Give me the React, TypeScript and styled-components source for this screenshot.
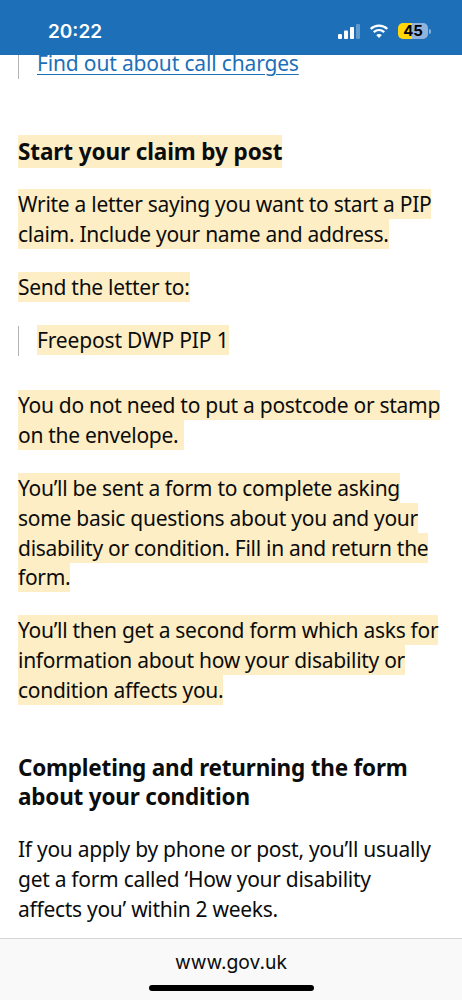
import styled, { createGlobalStyle } from "styled-components";

const colors = {
  blue: "#1d70b8",
  link: "#1d70b8",
  text: "#0b0c0c",
  highlight: "#fdeec5",
  rule: "#b1b4b6",
  bar: "#f9f9f9",
};

const GlobalStyle = createGlobalStyle`
  html, body {
    margin: 0;
    padding: 0;
    background: #fff;
  }
  body {
    font-family: "Noto Sans", "Open Sans", sans-serif;
    color: ${colors.text};
  }
`;

const Page = styled.div`
  width: 462px;
  height: 1000px;
  display: flex;
  flex-direction: column;
  overflow: hidden;
`;

const StatusBar = styled.header`
  position: relative;
  z-index: 2;
  flex: 0 0 55px;
  background: ${colors.blue};
  color: #fff;
  display: flex;
  align-items: center;
  justify-content: space-between;
  padding: 7px 31px 0 48px;
  box-sizing: border-box;
`;

const Clock = styled.span`
  font-family: "Inter", sans-serif;
  font-size: 19px;
  font-weight: 600;
`;

const StatusIcons = styled.div`
  display: flex;
  align-items: center;
  gap: 9px;
`;

const Battery = styled.div`
  width: 30px;
  height: 16px;
  border-radius: 5px;
  background: linear-gradient(90deg, #ffd60a 47%, #8fb3dc 47%);
  color: #000;
  font-family: "Inter", sans-serif;
  font-size: 15px;
  font-weight: 700;
  line-height: 16px;
  text-align: center;
`;

const BatteryWrap = styled.div`
  display: flex;
  align-items: center;
  gap: 1px;
`;

const BatteryCap = styled.span`
  width: 2px;
  height: 5px;
  border-radius: 0 2px 2px 0;
  background: #8fb3dc;
`;

const Content = styled.main`
  flex: 1;
  margin-top: -6px;
  padding: 0 18px;
  overflow: hidden;
`;

const Inset = styled.div<{ $gap: number }>`
  border-left: 1px solid ${colors.rule};
  padding-left: 18px;
  margin-bottom: ${(p) => p.$gap}px;
  font-size: 21px;
  letter-spacing: -0.16px;
  line-height: 29.7px;
`;

const CallLink = styled.a`
  color: ${colors.link};
  text-decoration: underline;
  text-decoration-thickness: 1px;
  text-underline-offset: 3px;
`;

const Heading = styled.h2<{ $gap: number; $spacing?: number }>`
  margin: 0 0 ${(p) => p.$gap}px;
  font-size: 22.5px;
  letter-spacing: ${(p) => p.$spacing ?? -0.1}px;
  line-height: 29.7px;
  font-weight: 700;
`;

const Para = styled.p<{ $gap?: number; $maxWidth?: number }>`
  margin: 0 0 ${(p) => p.$gap ?? 23.5}px;
  max-width: ${(p) => (p.$maxWidth ? `${p.$maxWidth}px` : "none")};
  font-size: 21px;
  letter-spacing: -0.28px;
  line-height: 29.7px;
`;

const Mark = styled.mark`
  background: ${colors.highlight};
  color: inherit;
  padding: 1px 0;
`;

const AddressBar = styled.footer`
  position: relative;
  flex: 0 0 62px;
  box-sizing: border-box;
  background: ${colors.bar};
  border-top: 1px solid #d4d4d4;
  padding-top: 8px;
  text-align: center;
  font-family: "Inter", sans-serif;
  font-size: 19.3px;
  line-height: 30px;
`;

const HomeIndicator = styled.div`
  position: absolute;
  left: 149px;
  bottom: 9px;
  width: 165px;
  height: 6px;
  border-radius: 3px;
  background: #000;
`;

const SignalIcon = () => (
  <svg width="22" height="15" viewBox="0 0 22 15">
    <rect x="0" y="10" width="4" height="5" rx="1" fill="#fff" />
    <rect x="6" y="6.500" width="4" height="8.500" rx="1" fill="#fff" />
    <rect x="12" y="3" width="4" height="12" rx="1" fill="#fff" />
    <rect x="18" y="0" width="4" height="15" rx="1" fill="#fff" opacity="0.3" />
  </svg>
);

const WifiIcon = () => (
  <svg width="20" height="14" viewBox="0 0 22 16" fill="none" stroke="#fff" strokeWidth="2.6">
    <path d="M1.5 5.600C6.900.6 15.100.6 20.500 5.600" />
    <path d="M5 9.200c3.500-3 8.500-3 12 0" />
    <path d="M11 16l-3.200-3.400c1.800-1.400 4.600-1.400 6.400 0z" fill="#fff" stroke="none" />
  </svg>
);

export default function App() {
  return (
    <Page>
      <GlobalStyle />
      <StatusBar>
        <Clock>20:22</Clock>
        <StatusIcons>
          <SignalIcon />
          <WifiIcon />
          <BatteryWrap>
            <Battery>45</Battery>
            <BatteryCap />
          </BatteryWrap>
        </StatusIcons>
      </StatusBar>
      <Content>
        <Inset $gap={58}>
          <CallLink href="#">Find out about call charges</CallLink>
        </Inset>
        <Heading $gap={23.5}>
          <Mark>Start your claim by post</Mark>
        </Heading>
        <Para>
          <Mark>Write a letter saying you want to start a PIP claim. Include your name and address.</Mark>
        </Para>
        <Para>
          <Mark>Send the letter to:</Mark>
        </Para>
        <Inset $gap={35.5}>
          <Mark>Freepost DWP PIP 1</Mark>
        </Inset>
        <Para>
          <Mark>You do not need to put a postcode or stamp on the envelope.&nbsp;</Mark>
        </Para>
        <Para>
          <Mark>You’ll be sent a form to complete asking some basic questions about you and your disability or condition. Fill in and return the form.</Mark>
        </Para>
        <Para $gap={47}>
          <Mark>You’ll then get a second form which asks for information about how your disability or condition affects you.</Mark>
        </Para>
        <Heading $gap={23.5} $spacing={-0.2}>Completing and returning the form about your condition</Heading>
        <Para $maxWidth={418}>If you apply by phone or post, you’ll usually get a form called ‘How your disability affects you’ within 2 weeks.</Para>
      </Content>
      <AddressBar>
        www.gov.uk
        <HomeIndicator />
      </AddressBar>
    </Page>
  );
}
